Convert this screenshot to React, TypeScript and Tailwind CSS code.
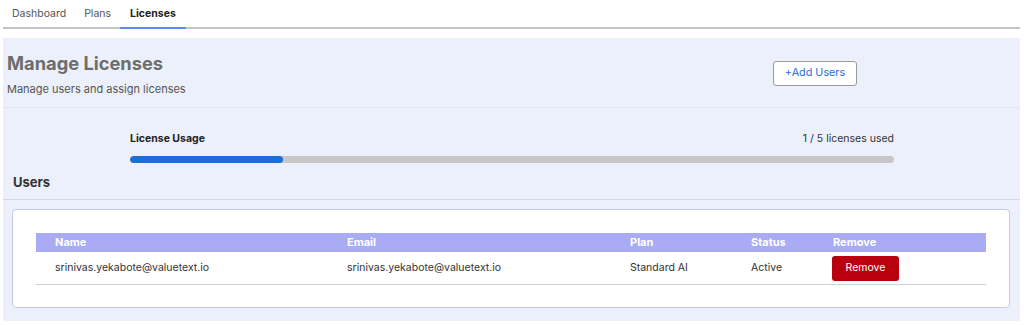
import React from "react";

const font = { fontFamily: "Inter, 'Noto Sans', sans-serif" };

export default function App() {
  const used = 1;
  const total = 5;
  return (
    <div className="w-[1024px] h-[325px] overflow-hidden bg-white" style={font}>
      {/* Tabs */}
      <div className="ml-[3px] mr-[4px] flex h-[29px] border-b-2 border-[#c4c4c4]">
        <div className="relative flex items-center px-[9px] text-[10.5px] text-[#555]">Dashboard</div>
        <div className="relative flex items-center px-[9px] text-[10.5px] text-[#555]">Plans</div>
        <div className="relative flex items-center px-[10px] text-[10.5px] font-bold text-[#222]">
          Licenses
          <span className="absolute left-0 right-0 bottom-[-2px] h-[2px] bg-[#5b8def]" />
        </div>
      </div>

      {/* Panel */}
      <div className="ml-[3px] mr-[4px] mt-[9px] h-[283px] bg-[#ecf0fa]">
        {/* Header */}
        <div className="flex h-[70px] items-center justify-between border-b border-[#e2e5ef] pl-[4px] pr-[163px]">
          <div className="flex flex-col pt-[2px]">
            <h1 className="text-[18.3px] font-bold leading-[24px] text-[#6d6d6d]">Manage Licenses</h1>
            <p className="mt-[6px] text-[11px] leading-[16px] text-[#555]">Manage users and assign licenses</p>
          </div>
          <button className="mt-[2px] h-[25px] w-[84px] rounded-[3px] border border-[#9a9a9a] bg-white text-[10.8px] text-[#2a6fd6]">
            +Add Users
          </button>
        </div>

        {/* Usage */}
        <div className="pl-[127px] pr-[126px] pt-[23px]">
          <div className="flex items-center justify-between text-[10.5px] leading-[16px]">
            <span className="font-bold text-[#222]">License Usage</span>
            <span className="text-[#333]">{used} / {total} licenses used</span>
          </div>
          <div className="mt-[9px] h-[7px] w-full overflow-hidden rounded-full bg-[#c7c7c7]">
            <div className="h-full rounded-full bg-[#1b6fd6]" style={{ width: `${(used / total) * 100}%` }} />
          </div>
        </div>

        {/* Users title */}
        <div className="border-b border-[#d6d8e0] px-[10px] pb-[8px] pt-[10px]">
          <h2 className="text-[13px] font-bold leading-[18px] text-[#333]">Users</h2>
        </div>

        {/* Card */}
        <div className="ml-[9px] mr-[10px] mt-[9px] rounded-[4px] border border-[#c5c8f6] bg-white px-[23px] pb-[22px] pt-[23px]">
          <div className="grid grid-cols-[292px_283px_121px_82px_1fr] bg-[#aaabf5] text-[11px] font-bold leading-[19px] text-white">
            <div className="pl-[19px]">Name</div>
            <div className="pl-[19px]">Email</div>
            <div className="pl-[19px]">Plan</div>
            <div className="pl-[19px]">Status</div>
            <div className="pl-[19px]">Remove</div>
          </div>
          <div className="grid h-[33px] grid-cols-[292px_283px_121px_82px_1fr] items-center border-b border-[#cfcfcf] text-[10.5px] text-[#333]">
            <div className="pl-[19px]">srinivas.yekabote@valuetext.io</div>
            <div className="pl-[19px]">srinivas.yekabote@valuetext.io</div>
            <div className="pl-[19px]">Standard AI</div>
            <div className="pl-[19px]">Active</div>
            <div className="pl-[18px]">
              <button className="h-[25px] w-[67px] rounded-[3px] bg-[#b8000f] text-[10.5px] text-white">Remove</button>
            </div>
          </div>
        </div>
      </div>
    </div>
  );
}
